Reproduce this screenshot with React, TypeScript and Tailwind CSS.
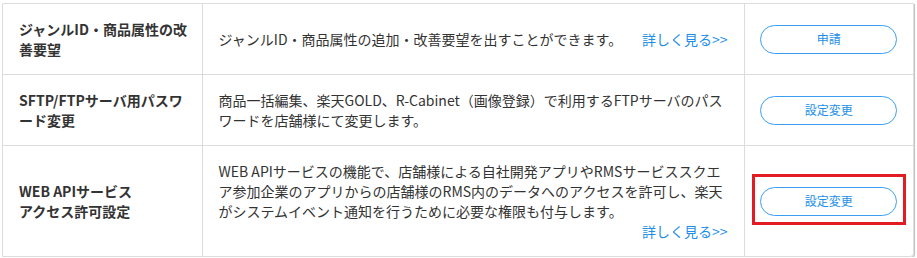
import React from "react"

type Row = {
  title: React.ReactNode
  desc: string
  link?: boolean
  action: string
  marked?: boolean
}

const rows: Row[] = [
  {
    title: "ジャンルID・商品属性の改善要望",
    desc: "ジャンルID・商品属性の追加・改善要望を出すことができます。",
    link: true,
    action: "申請",
  },
  {
    title: "SFTP/FTPサーバ用パスワード変更",
    desc: "商品一括編集、楽天GOLD、R-Cabinet（画像登録）で利用するFTPサーバのパスワードを店舗様にて変更します。",
    action: "設定変更",
  },
  {
    title: (
      <>
        WEB APIサービス
        <br />
        アクセス許可設定
      </>
    ),
    desc: "WEB APIサービスの機能で、店舗様による自社開発アプリやRMSサービススクエア参加企業のアプリからの店舗様のRMS内のデータへのアクセスを許可し、楽天がシステムイベント通知を行うために必要な権限も付与します。",
    link: true,
    action: "設定変更",
    marked: true,
  },
]

export default function App() {
  return (
    <div className="bg-white pl-[2px] pt-[3px] font-['Noto_Sans_CJK_JP',sans-serif] text-[#333]">
      <div className="w-[912px] overflow-hidden rounded-br-[4px] border border-[#dcdcdc] shadow-[1px_1px_1px_rgba(0,0,0,0.25)]">
        <table className="w-full table-fixed border-collapse">
          <colgroup>
            <col className="w-[199px]" />
            <col className="w-[542px]" />
            <col />
          </colgroup>
          <tbody>
            {rows.map((row, i) => (
              <tr key={i} className={i > 0 ? "border-t border-[#dcdcdc]" : ""}>
                <td className="pl-4 pr-3 py-[15px] align-middle text-[14px] font-bold leading-5">
                  {row.title}
                </td>
                <td className="border-l border-[#dcdcdc] px-4 py-[15px] align-middle text-[14px] leading-5">
                  <div className="flex flex-wrap">
                    <p>{row.desc}</p>
                    {row.link && (
                      <a href="#" className="ml-auto text-[#1d8fe6]">
                        詳しく見る&gt;&gt;
                      </a>
                    )}
                  </div>
                </td>
                <td className="border-l border-[#dcdcdc] align-middle">
                  <div className="flex justify-center">
                    <div className="relative">
                      <button className="h-[29px] w-[137px] rounded-full border border-[#3a9ff0] bg-white text-[12px] text-[#1d8fe6]">
                        {row.action}
                      </button>
                      {row.marked && (
                        <span className="pointer-events-none absolute -top-[13px] -right-[9px] -bottom-[9px] -left-[8px] border-[3px] border-[#e31b23]" />
                      )}
                    </div>
                  </div>
                </td>
              </tr>
            ))}
          </tbody>
        </table>
      </div>
    </div>
  )
}
